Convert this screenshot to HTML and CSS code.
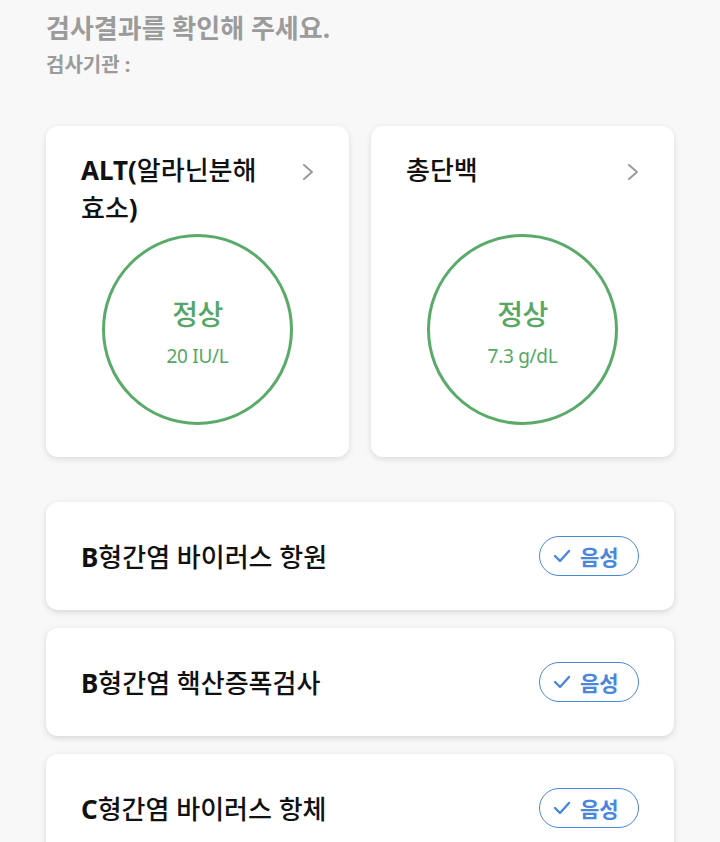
FILE: index.html
```html
<!DOCTYPE html>
<html lang="ko">
<head>
<meta charset="utf-8">
<title>검사결과</title>
<link rel="stylesheet" href="styles.css">
</head>
<body>
<main class="page">
  <header class="intro">
    <h1 class="intro-title">검사결과를 확인해 주세요.</h1>
    <p class="intro-sub">검사기관 :</p>
  </header>

  <section class="summary">
    <article class="summary-card">
      <div class="summary-head">
        <h2 class="summary-title"><span class="latin">ALT(</span><span>알라닌분해</span><span>효소</span><span class="latin">)</span></h2>
        <svg class="chevron" width="12" height="18" viewBox="0 0 12 18"><polyline points="2,2 10,9 2,16" fill="none" stroke="#9a9a9a" stroke-width="2" stroke-linecap="round" stroke-linejoin="round"/></svg>
      </div>
      <div class="ring">
        <span class="ring-status">정상</span>
        <span class="ring-value">20 IU/L</span>
      </div>
    </article>
    <article class="summary-card">
      <div class="summary-head">
        <h2 class="summary-title">총단백</h2>
        <svg class="chevron" width="12" height="18" viewBox="0 0 12 18"><polyline points="2,2 10,9 2,16" fill="none" stroke="#9a9a9a" stroke-width="2" stroke-linecap="round" stroke-linejoin="round"/></svg>
      </div>
      <div class="ring">
        <span class="ring-status">정상</span>
        <span class="ring-value">7.3 g/dL</span>
      </div>
    </article>
  </section>

  <section class="results">
    <div class="result-row">
      <span class="result-name"><span class="latin">B</span><span>형간염 바이러스 항원</span></span>
      <span class="badge"><svg width="18" height="14" viewBox="0 0 18 14"><polyline points="2,7 7,12 16,2" fill="none" stroke="#4a87db" stroke-width="2.4" stroke-linecap="round" stroke-linejoin="round"/></svg>음성</span>
    </div>
    <div class="result-row">
      <span class="result-name"><span class="latin">B</span><span>형간염 핵산증폭검사</span></span>
      <span class="badge"><svg width="18" height="14" viewBox="0 0 18 14"><polyline points="2,7 7,12 16,2" fill="none" stroke="#4a87db" stroke-width="2.4" stroke-linecap="round" stroke-linejoin="round"/></svg>음성</span>
    </div>
    <div class="result-row">
      <span class="result-name"><span class="latin">C</span><span>형간염 바이러스 항체</span></span>
      <span class="badge"><svg width="18" height="14" viewBox="0 0 18 14"><polyline points="2,7 7,12 16,2" fill="none" stroke="#4a87db" stroke-width="2.4" stroke-linecap="round" stroke-linejoin="round"/></svg>음성</span>
    </div>
  </section>
</main>
</body>
</html>
```

FILE: styles.css
```css
html, body {
  margin: 0;
  padding: 0;
  background: #f8f8f8;
}

body {
  font-family: "Noto Sans", "Noto Sans CJK KR", sans-serif;
  color: #111;
}

.page {
  padding: 11px 46px 0;
}

.intro-title {
  margin: 0;
  font-size: 26px;
  line-height: 34px;
  font-weight: 700;
  color: #9b9b9b;
}

.intro-sub {
  margin: 6px 0 0;
  font-size: 20px;
  line-height: 28px;
  font-weight: 700;
  color: #9b9b9b;
}

.summary {
  margin-top: 47px;
  display: grid;
  grid-template-columns: 1fr 1fr;
  gap: 22px;
}

.summary-card {
  background: #fff;
  border-radius: 12px;
  box-shadow: 0 2px 6px rgba(0, 0, 0, 0.12);
  padding: 25px 35px 32px;
  display: flex;
  flex-direction: column;
  align-items: center;
}

.summary-head {
  align-self: stretch;
  display: flex;
  justify-content: space-between;
  align-items: flex-start;
  min-height: 76px;
}

.summary-title {
  margin: 0;
  max-width: 192px;
  font-size: 26px;
  line-height: 38px;
  font-weight: 500;
}

.latin {
  font-weight: 700;
}

.chevron {
  margin-top: 12px;
  flex: none;
}

.ring {
  margin-top: 7px;
  width: 191px;
  height: 191px;
  box-sizing: border-box;
  border: 3.5px solid #5aab69;
  border-radius: 50%;
  display: flex;
  flex-direction: column;
  align-items: center;
  justify-content: center;
  color: #55a765;
  gap: 15px;
  padding-top: 5px;
}

.ring-status {
  font-size: 28px;
  line-height: 32px;
  font-weight: 500;
  letter-spacing: -0.5px;
}

.ring-value {
  font-size: 19px;
  line-height: 22px;
  letter-spacing: -0.3px;
}

.results {
  margin-top: 45px;
  display: flex;
  flex-direction: column;
  gap: 18px;
}

.result-row {
  background: #fff;
  border-radius: 12px;
  box-shadow: 0 2px 6px rgba(0, 0, 0, 0.14);
  height: 108px;
  padding: 0 35px;
  display: flex;
  justify-content: space-between;
  align-items: center;
}

.result-name {
  font-size: 26px;
  font-weight: 500;
}

.badge {
  box-sizing: border-box;
  width: 100px;
  height: 40px;
  border: 1.5px solid #4a87db;
  border-radius: 20px;
  display: flex;
  align-items: center;
  gap: 9px;
  padding-left: 13px;
  color: #4a87db;
  font-size: 21px;
  font-weight: 700;
}
```
